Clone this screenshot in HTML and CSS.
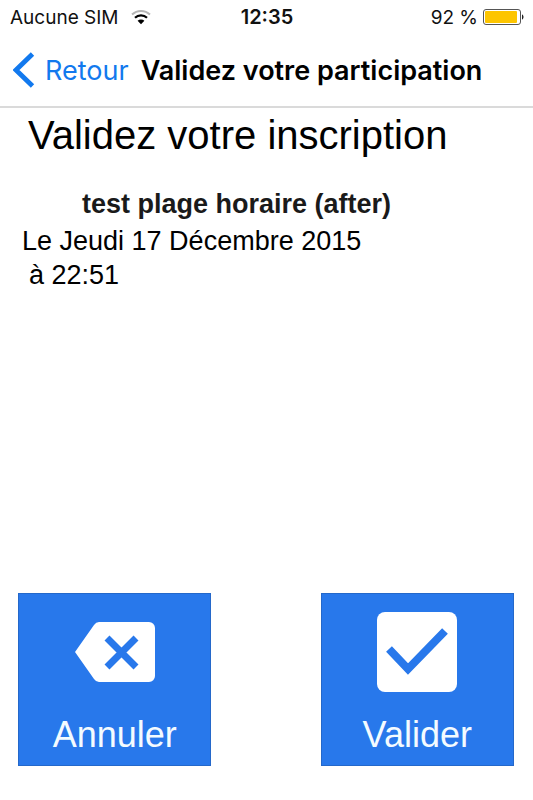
FILE: index.html
```html
<!DOCTYPE html>
<html lang="fr">
<head>
    <meta charset="UTF-8">
    <meta name="viewport" content="width=device-width, initial-scale=1.0">
    <title>Validez votre participation</title>
    <link rel="stylesheet" href="styles.css">
</head>
<body>
    <div class="status-bar">
        <div class="carrier">
            <span>Aucune SIM</span>
            <svg class="wifi" viewBox="0 0 20 16" aria-hidden="true">
                <path d="M1 5.5a13 13 0 0 1 18 0" fill="none" stroke="#b5b5b5" stroke-width="2"/>
                <path d="M4 8.8a8.6 8.6 0 0 1 12 0" fill="none" stroke="#000" stroke-width="2.2"/>
                <path d="M6.6 11.8a4.8 4.8 0 0 1 6.8 0L10 15.2z" fill="#000"/>
            </svg>
        </div>
        <span class="clock">12:35</span>
        <div class="power">
            <span>92 %</span>
            <svg class="battery" viewBox="0 0 41 16" aria-hidden="true">
                <rect x="0.5" y="0.5" width="37" height="15" rx="2.5" fill="#fff" stroke="#555"/>
                <rect x="2" y="2" width="32" height="12" rx="1" fill="#fdc500"/>
                <path d="M39 5.5c2 .5 2 4.5 0 5z" fill="#222"/>
            </svg>
        </div>
    </div>

    <header class="nav-bar">
        <a class="back" href="#">
            <svg class="chevron" viewBox="0 0 22 36" aria-hidden="true">
                <path d="M19.5 2L3 18l16.5 16" fill="none" stroke="currentColor" stroke-width="4.8"/>
            </svg>
            Retour
        </a>
        <h1>Validez votre participation</h1>
    </header>

    <main class="content">
        <h2>Validez votre inscription</h2>
        <h3>test plage horaire (after)</h3>
        <p>Le Jeudi 17 Décembre 2015</p>
        <p class="time">à 22:51</p>
    </main>

    <div class="actions">
        <button type="button" class="action">
            <svg viewBox="0 0 80 80" aria-hidden="true">
                <path d="M24 10h50a6 6 0 0 1 6 6v48a6 6 0 0 1-6 6H24q-3 0-5-3L0 40 19 13q2-3 5-3z" fill="#fff"/>
                <path d="M32 26l29 29M61 26L32 55" fill="none" stroke="#2878eb" stroke-width="7"/>
            </svg>
            <span>Annuler</span>
        </button>
        <button type="button" class="action">
            <svg viewBox="0 0 80 80" aria-hidden="true">
                <rect width="80" height="80" rx="8" fill="#fff"/>
                <path d="M12 37l19 20 37-38" fill="none" stroke="#2878eb" stroke-width="8"/>
            </svg>
            <span>Valider</span>
        </button>
    </div>
</body>
</html>
```
FILE: styles.css
```css
/* Base Styles */
* {
    box-sizing: border-box;
    margin: 0;
    padding: 0;
}

body {
    display: flex;
    flex-direction: column;
    min-height: 100vh;
    font-family: "Liberation Sans", Arial, sans-serif;
    background: #fff;
    color: #000;
}

/* Status Bar */
.status-bar {
    display: grid;
    grid-template-columns: 1fr auto 1fr;
    align-items: center;
    height: 34px;
    padding: 0 9px 0 10px;
    font-family: Inter, sans-serif;
    font-size: 19px;
    color: #111;
}

.carrier,
.power {
    display: flex;
    align-items: center;
    gap: 12px;
}

.power {
    justify-content: flex-end;
    gap: 5px;
}

.clock {
    font-size: 20px;
    font-weight: 600;
}

.wifi {
    width: 20px;
    height: 16px;
}

.battery {
    width: 41px;
    height: 16px;
}

/* Navigation Bar */
.nav-bar {
    display: flex;
    align-items: center;
    gap: 12px;
    height: 74px;
    padding: 0 13px;
    border-bottom: 2px solid #dadada;
    font-family: Inter, sans-serif;
    white-space: nowrap;
}

.nav-bar h1 {
    font-size: 27px;
    font-weight: 600;
}

.back {
    display: flex;
    align-items: center;
    gap: 10px;
    font-size: 27px;
    color: #1279ee;
    text-decoration: none;
}

.chevron {
    width: 22px;
    height: 36px;
}

/* Content */
.content {
    padding: 4px 22px;
    font-size: 27px;
    line-height: 34px;
}

.content h2 {
    padding-left: 6px;
    font-size: 40px;
    font-weight: 400;
    line-height: 46px;
}

.content h3 {
    margin-top: 28px;
    padding: 0 60px 2px;
    font-size: 27px;
    line-height: 36px;
    color: #1a1a1a;
}

.content .time {
    padding-left: 7px;
}

/* Action Buttons */
.actions {
    display: flex;
    justify-content: space-between;
    margin-top: auto;
    padding: 0 19px 34px 18px;
}

.action {
    display: flex;
    flex-direction: column;
    align-items: center;
    gap: 22px;
    width: 39%;
    padding: 18px 0 9px;
    border: 1px solid #2468ca;
    background: #2878eb;
    color: #f4fbff;
    font-family: inherit;
    font-size: 36px;
    line-height: 42px;
    cursor: pointer;
}

.action svg {
    width: 80px;
    height: 80px;
}
```
